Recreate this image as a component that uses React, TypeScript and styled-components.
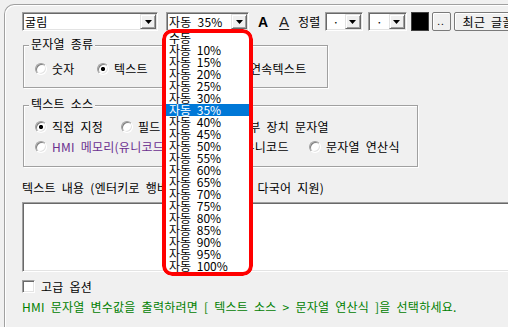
import React from "react";
import styled, { createGlobalStyle } from "styled-components";

const sizes = ["수동", ...[10, 15, 20, 25, 30, 35, 40, 45, 50, 55, 60, 65, 70, 75, 80, 85, 90, 95, 100].map(n => `자동 ${n}%`)];

const Arrow = () => (
  <svg width="7" height="4" viewBox="0 0 7 4">
    <polygon points="0,0 7,0 3.5,4" fill="#000" />
  </svg>
);

const App = () => {
  return (
    <Page>
      <GlobalStyle />
      <Frame>
        <Toolbar>
          <Combo $w={136}>
            <ComboText>굴림</ComboText>
            <DropBtn><Arrow /></DropBtn>
          </Combo>
          <Combo $w={83} $ml={8}>
            <ComboText>자동 35%</ComboText>
            <DropBtn><Arrow /></DropBtn>
          </Combo>
          <BoldA>A</BoldA>
          <UnderA>A</UnderA>
          <ToolLabel>정렬</ToolLabel>
          <Combo $w={38} $ml={4}>
            <ComboText $center>·</ComboText>
            <DropBtn><Arrow /></DropBtn>
          </Combo>
          <Combo $w={39} $ml={5}>
            <ComboText $center>·</ComboText>
            <DropBtn><Arrow /></DropBtn>
          </Combo>
          <Swatch />
          <DotsButton>..</DotsButton>
          <RecentButton>최근 글꼴</RecentButton>
        </Toolbar>

        <Group $w={305} $h={43} $mt={14}>
          <Legend>문자열 종류</Legend>
          <OptionRow $mt={9}>
            <Option $w={62}><Radio />숫자</Option>
            <Option $w={75}><Radio $on />텍스트</Option>
            <Option $w={61}><Radio />날짜</Option>
            <Option><Radio />연속텍스트</Option>
          </OptionRow>
        </Group>

        <Group $w={395} $h={62} $mt={17}>
          <Legend>텍스트 소스</Legend>
          <OptionRow $mt={7}>
            <Option $w={86}><Radio $on />직접 지정</Option>
            <Option $w={100}><Radio />필드</Option>
            <Option><Radio />외부 장치 문자열</Option>
          </OptionRow>
          <OptionRow>
            <Option $w={163} $color="#6b2f8f"><Radio />HMI 메모리(유니코드)</Option>
            <Option $w={111}><Radio />장치 유니코드</Option>
            <Option><Radio />문자열 연산식</Option>
          </OptionRow>
        </Group>

        <FieldLabel>텍스트 내용 (엔터키로 행바꿈, 유니코드 및 다국어 지원)</FieldLabel>
        <TextBox />

        <CheckRow>
          <CheckBox />
          고급 옵션
        </CheckRow>
        <Hint>HMI 문자열 변수값을 출력하려면 [ 텍스트 소스 &gt; 문자열 연산식 ]을 선택하세요.</Hint>
      </Frame>

      <Popup>
        {sizes.map(s => (
          <Item key={s} $sel={s === "자동 35%"}>{s}</Item>
        ))}
        <RedRing />
      </Popup>
    </Page>
  );
};

export default App;

const GlobalStyle = createGlobalStyle`
  html, body {
    margin: 0;
    padding: 0;
    background: #f0f0f0;
  }
  body {
    font-family: "Noto Sans CJK KR", "Noto Sans", sans-serif;
    font-size: 12px;
    line-height: 12px;
    color: #000;
    word-spacing: 3px;
    letter-spacing: 0.25px;
    overflow: hidden;
  }
`;

const Page = styled.div`
  position: relative;
  width: 508px;
  height: 327px;
  overflow: hidden;
`;

const Frame = styled.div`
  margin: 4px 0 0 4px;
  height: 323px;
  box-sizing: border-box;
  border-top: 1px solid #a0a0a0;
  border-left: 1px solid #a0a0a0;
  border-top-left-radius: 10px;
  box-shadow: inset 1px 1px 0 #fff;
  padding: 7px 0 0 17px;
  display: flex;
  flex-direction: column;
  align-items: flex-start;
`;

const Toolbar = styled.div`
  display: flex;
  align-items: center;
  height: 19px;
  white-space: nowrap;
`;

const Combo = styled.div<{ $w: number; $ml?: number }>`
  display: flex;
  align-items: center;
  flex-shrink: 0;
  width: ${p => p.$w}px;
  height: 19px;
  margin-left: ${p => p.$ml ?? 0}px;
  box-sizing: border-box;
  background: #fff;
  border: 1px solid;
  border-color: #a0a0a0 #fff #fff #a0a0a0;
  box-shadow: inset 1px 1px 0 #696969, inset -1px -1px 0 #e3e3e3;
  padding: 1px;
`;

const ComboText = styled.span<{ $center?: boolean }>`
  flex: 1;
  padding-left: 1px;
  text-align: ${p => (p.$center ? "center" : "left")};
  overflow: hidden;
`;

const DropBtn = styled.span`
  width: 16px;
  height: 15px;
  box-sizing: border-box;
  display: flex;
  align-items: center;
  justify-content: center;
  background: #f0f0f0;
  border: 1px solid;
  border-color: #e3e3e3 #696969 #696969 #e3e3e3;
  box-shadow: inset 1px 1px 0 #fff, inset -1px -1px 0 #a0a0a0;
`;

const BoldA = styled.span`
  width: 12px;
  margin-left: 9px;
  font-family: "Liberation Sans", Arial, sans-serif;
  font-weight: 700;
  font-size: 14px;
`;

const UnderA = styled.span`
  width: 12px;
  margin-left: 9px;
  font-family: "Liberation Sans", Arial, sans-serif;
  font-size: 15px;
  font-weight: 400;
  color: #222;
  text-decoration: underline;
  text-underline-offset: 2px;
`;

const ToolLabel = styled.span`
  margin-left: 7px;
`;

const Swatch = styled.span`
  width: 18px;
  height: 19px;
  margin-left: 4px;
  box-sizing: border-box;
  background: #000;
  border: 1px solid #404040;
`;

const RaisedButton = styled.span`
  height: 19px;
  box-sizing: border-box;
  display: flex;
  background: #f0f0f0;
  border: 1px solid #7a7a7a;
  border-radius: 2px;
  box-shadow: inset 1px 1px 0 #fff;
  flex-shrink: 0;
`;

const DotsButton = styled(RaisedButton)`
  width: 19px;
  margin-left: 3px;
  align-items: flex-end;
  justify-content: center;
  padding-bottom: 3px;
  font-size: 10px;
  letter-spacing: 1px;
`;

const RecentButton = styled(RaisedButton)`
  width: 80px;
  margin-left: 3px;
  align-items: center;
  padding-left: 8px;
`;

const Group = styled.div<{ $w: number; $h: number; $mt: number }>`
  width: ${p => p.$w}px;
  height: ${p => p.$h}px;
  margin: ${p => p.$mt}px 0 0 1px;
  box-sizing: border-box;
  border: 1px solid #a0a0a0;
  box-shadow: inset 1px 1px 0 #fff, 1px 1px 0 #fff;
  padding-left: 11px;
  display: flex;
  flex-direction: column;
`;

const Legend = styled.div`
  width: fit-content;
  margin: -8px 0 0 -6px;
  padding: 0 2px;
  background: #f0f0f0;
  line-height: 12px;
`;

const OptionRow = styled.div<{ $mt?: number }>`
  display: flex;
  align-items: center;
  height: 20px;
  margin-top: ${p => p.$mt ?? 0}px;
`;

const Option = styled.label<{ $w?: number; $color?: string }>`
  display: flex;
  align-items: center;
  gap: 5px;
  flex-shrink: 0;
  width: ${p => (p.$w ? `${p.$w}px` : "auto")};
  color: ${p => p.$color ?? "#000"};
  white-space: nowrap;
`;

const Radio = styled.span<{ $on?: boolean }>`
  width: 12px;
  height: 12px;
  flex-shrink: 0;
  box-sizing: border-box;
  border-radius: 50%;
  border: 1px solid;
  border-color: #a0a0a0 #fff #fff #a0a0a0;
  box-shadow: inset 1px 1px 0 #808080, inset -1px -1px 0 #e3e3e3;
  background: ${p =>
    p.$on ? "radial-gradient(circle, #000 0 1.8px, #fff 2.4px)" : "#fff"};
`;

const FieldLabel = styled.div`
  margin-top: 15px;
  white-space: nowrap;
`;

const TextBox = styled.div`
  width: 500px;
  height: 70px;
  margin-top: 8px;
  flex-shrink: 0;
  box-sizing: border-box;
  background: #fff;
  border: 1px solid;
  border-color: #a0a0a0 #fff #fff #a0a0a0;
  box-shadow: inset 1px 1px 0 #696969, inset -1px -1px 0 #e3e3e3;
`;

const CheckRow = styled.label`
  display: flex;
  align-items: center;
  gap: 6px;
  margin-top: 8px;
  height: 13px;
`;

const CheckBox = styled.span`
  width: 13px;
  height: 13px;
  box-sizing: border-box;
  background: #fff;
  border: 1px solid;
  border-color: #a0a0a0 #fff #fff #a0a0a0;
  box-shadow: inset 1px 1px 0 #696969, inset -1px -1px 0 #e3e3e3;
`;

const Hint = styled.div`
  margin-top: 8px;
  color: #008000;
  white-space: nowrap;
`;

const Popup = styled.div`
  position: absolute;
  left: 162px;
  top: 29px;
  width: 91px;
  height: 247px;
  box-sizing: border-box;
  padding-top: 3px;
  background: #fff;
  border-radius: 10px;
  overflow: hidden;
  z-index: 5;
`;

const Item = styled.div<{ $sel?: boolean }>`
  height: 12px;
  line-height: 12px;
  padding-left: 7px;
  white-space: nowrap;
  letter-spacing: 0;
  background: ${p => (p.$sel ? "#0078d7" : "transparent")};
  color: ${p => (p.$sel ? "#fff" : "#000")};
`;

const RedRing = styled.div`
  position: absolute;
  inset: 0;
  border: 4px solid #ff0000;
  border-radius: 10px;
  pointer-events: none;
`;
